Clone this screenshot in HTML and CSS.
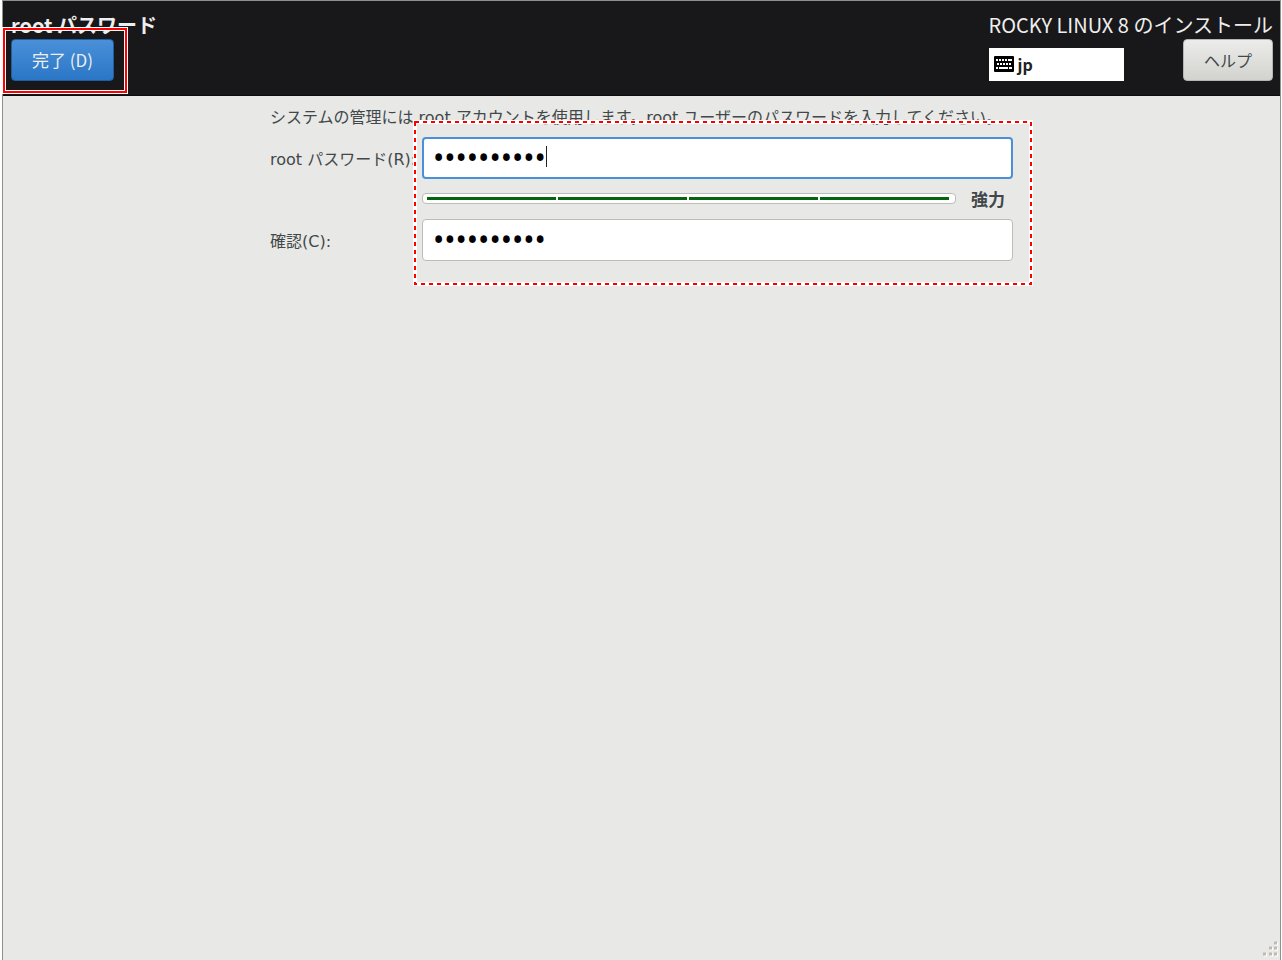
FILE: index.html
```html
<!DOCTYPE html>
<html lang="ja">
<head>
    <meta charset="UTF-8">
    <meta name="viewport" content="width=device-width, initial-scale=1.0">
    <title>root パスワード</title>
    <link rel="stylesheet" href="styles.css">
</head>
<body>
    <div class="window">
        <header class="header">
            <div class="header-left">
                <h1>root パスワード</h1>
                <div class="done">
                    <button class="btn btn-primary" type="submit" form="password-form">完了 (D)</button>
                    <div class="done-mark"></div>
                </div>
            </div>
            <div class="header-right">
                <h2>ROCKY LINUX 8 のインストール</h2>
                <div class="header-tools">
                    <div class="keyboard">
                        <svg width="20" height="16" viewBox="0 0 20 16" aria-hidden="true">
                            <rect width="20" height="16" rx="1" fill="#000"/>
                            <path d="M2 4h2M5 4h2M8 4h2M11 4h2M14 4h4M3 8h2M6 8h2M9 8h2M12 8h2M15 8h2M2 12h2M5 12h9M15 12h3" stroke="#fff" stroke-width="2"/>
                        </svg>
                        <span>jp</span>
                    </div>
                    <button class="btn" type="button">ヘルプ</button>
                </div>
            </div>
        </header>

        <main class="content">
            <form class="form" id="password-form">
                <p class="intro">システムの管理には root アカウントを使用します。root ユーザーのパスワードを入力してください。</p>

                <label for="password">root パスワード(R):</label>
                <div class="field">
                    <input class="focused" type="password" id="password" value="rockylinux">
                    <span class="caret"></span>
                </div>

                <div class="strength">
                    <div class="bar">
                        <span></span><span></span><span></span><span></span>
                    </div>
                    <strong>強力</strong>
                </div>

                <label for="confirm">確認(C):</label>
                <div class="field">
                    <input type="password" id="confirm" value="rockylinux">
                </div>

                <svg class="form-mark" aria-hidden="true">
                    <rect class="mark-back" x="2" y="2"/>
                    <rect class="mark-dash" x="2" y="2"/>
                </svg>
            </form>
        </main>

        <svg class="grip" width="16" height="16" viewBox="0 0 16 16" aria-hidden="true">
            <path d="M12 2h3M7 7h3M12 7h3M1 13h3M7 13h3M12 13h3" stroke="#fff" stroke-width="3" transform="translate(1 1)"/>
            <path d="M12 2h3M7 7h3M12 7h3M1 13h3M7 13h3M12 13h3" stroke="#bcbbae" stroke-width="3"/>
        </svg>
    </div>
</body>
</html>
```

FILE: styles.css
```css
* {
    box-sizing: border-box;
}
body {
    margin: 0;
    background: #fff;
    color: #42484a;
    font-family: "Noto Sans CJK JP", sans-serif;
    font-size: 16px;
    line-height: 24px;
}
h1, h2, p {
    margin: 0;
}
.window {
    position: relative;
    display: flex;
    flex-direction: column;
    min-height: 100vh;
    margin: 0 1px 0 2px;
    border: 1px solid #8f908e;
    border-bottom: none;
    background: #e8e8e6;
}
.header {
    display: flex;
    justify-content: space-between;
    padding: 10px 7px 14px 8px;
    background: #18181a;
    border-bottom: 1px solid #0c0c0c;
    color: #eee;
}
h1, h2 {
    font-size: 20px;
    line-height: 28px;
}
h2 {
    font-weight: normal;
}
.btn {
    height: 42px;
    padding: 0 20px;
    border: 1px solid #b5b5b2;
    border-radius: 4px;
    background: linear-gradient(#ececea, #d2d2cf);
    color: #42484a;
    font: inherit;
}
.btn-primary {
    border-color: #1f5f9f;
    background: linear-gradient(#4a90d9, #2a76c6);
    color: #eee;
    font-size: 17px;
}
.done {
    position: relative;
    width: max-content;
}
.done-mark {
    position: absolute;
    inset: -11px -13px -12px -8px;
    border: 2px solid #f00;
    outline: 1px solid #fff;
    box-shadow: inset 0 0 0 1px #fff;
    pointer-events: none;
}
.header-tools {
    display: flex;
    justify-content: space-between;
    align-items: center;
}
.keyboard {
    display: flex;
    align-items: center;
    gap: 4px;
    width: 135px;
    height: 33px;
    margin-top: 8px;
    padding: 0 5px;
    background: #fff;
    color: #222;
    font-weight: bold;
}
.content {
    flex: 1;
    padding: 10px 16px;
}
.form {
    position: relative;
    display: grid;
    grid-template-columns: 144px 1fr;
    column-gap: 8px;
    align-items: center;
    max-width: 743px;
    margin: 0 auto;
    font-family: "DejaVu Sans", "Noto Sans CJK JP", sans-serif;
}
.intro {
    grid-column: 1 / 3;
    margin-bottom: 7px;
    white-space: nowrap;
}
label {
    padding-top: 3px;
    white-space: nowrap;
}
.field {
    position: relative;
    display: flex;
}
input {
    width: 100%;
    height: 42px;
    padding: 0 10px 2px;
    border: 1px solid #bcbcb9;
    border-radius: 4px;
    background: #fff;
    color: #000;
    font-family: "Noto Sans", sans-serif;
    font-size: 30px;
    outline: none;
}
input.focused {
    padding: 0 9px 2px;
    border: 2px solid #4a90d9;
}
.caret {
    position: absolute;
    top: 9px;
    left: 124px;
    width: 1px;
    height: 21px;
    background: #222;
}
.strength {
    grid-column: 2;
    display: flex;
    align-items: center;
    gap: 15px;
    height: 40px;
}
.bar {
    display: flex;
    flex: 1;
    gap: 2px;
    height: 11px;
    margin-bottom: 2px;
    padding: 3px 6px 3px 4px;
    border: 1px solid #bcbcb9;
    border-radius: 4px;
    background: #fff;
}
.bar span {
    flex: 1;
    background: #06640f;
}
.strength strong {
    margin-right: 8px;
    padding-top: 2px;
    font-size: 17px;
}
.form-mark {
    position: absolute;
    top: 14px;
    left: 143px;
    width: calc(100% - 123px);
    height: 166px;
    pointer-events: none;
}
.form-mark rect {
    width: calc(100% - 4px);
    height: calc(100% - 4px);
    fill: none;
}
.mark-back {
    stroke: #fff;
    stroke-width: 4;
}
.mark-dash {
    stroke: #f00;
    stroke-width: 2;
    stroke-dasharray: 4 4;
}
.grip {
    position: absolute;
    right: 2px;
    bottom: 3px;
}
```
